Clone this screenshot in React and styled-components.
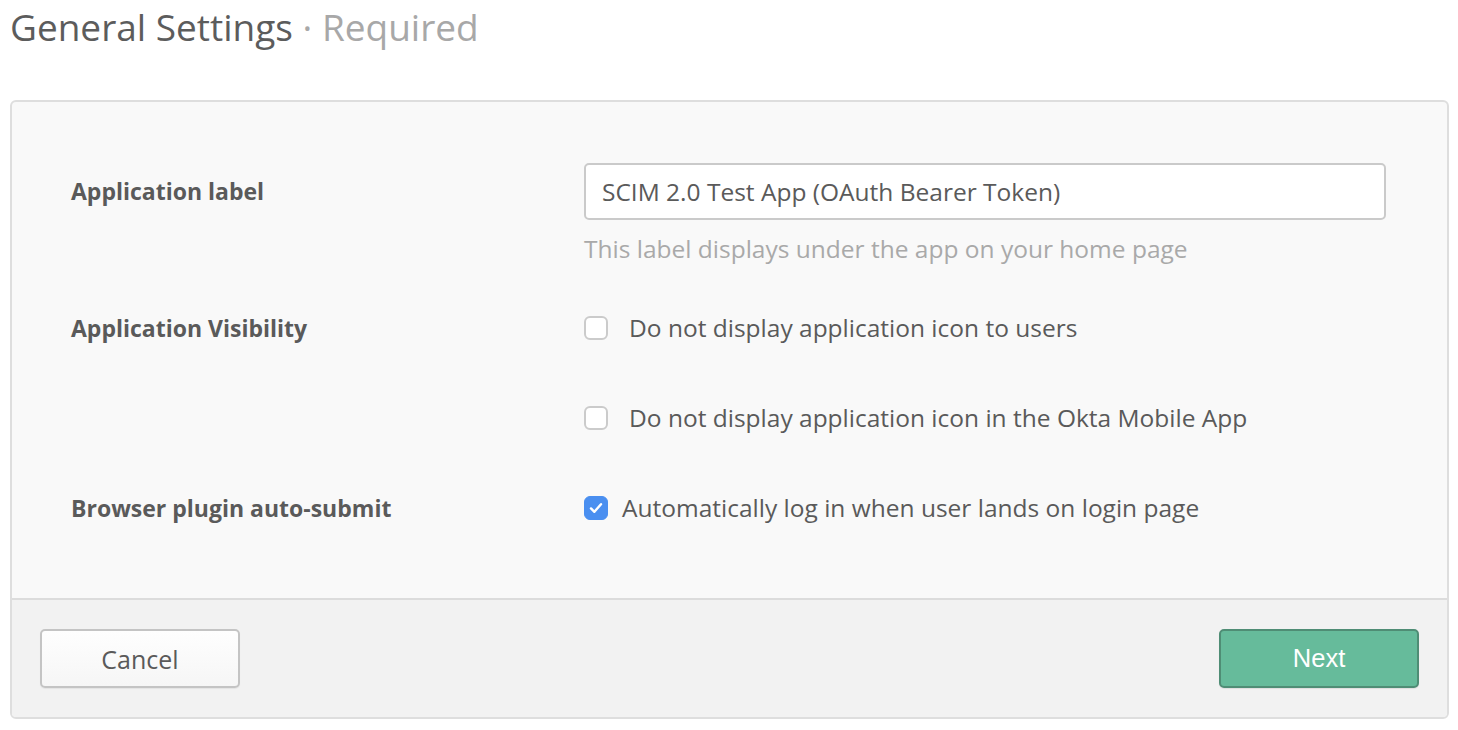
import React from "react";
import styled, { createGlobalStyle } from "styled-components";

const GlobalStyle = createGlobalStyle`
  html, body { margin: 0; padding: 0; background: #ffffff; }
  body { font-family: "Open Sans", "Noto Sans", sans-serif; color: #5c5c5c; }
  * { box-sizing: border-box; }
`;

const Page = styled.div`
  padding: 0 9px 0 10px;
`;

const Title = styled.h1`
  margin: 0 0 46px 0;
  font-size: 37px;
  font-weight: 400;
  line-height: 54px;
  color: #5c5c5c;
  white-space: nowrap;
`;

const Muted = styled.span`
  color: #a8a8a8;
`;

const Panel = styled.section`
  border: 2px solid #dedede;
  border-radius: 6px;
  overflow: hidden;
  background: #f9f9f9;
`;

const Body = styled.div`
  padding: 61px 61px 75px 59px;
`;

const Row = styled.div`
  display: grid;
  grid-template-columns: 513px 1fr;
  align-items: start;
  margin-top: ${(p) => p.$top || 0}px;
`;

const Label = styled.div`
  font-size: 23px;
  font-weight: 700;
  color: #5a5a5a;
  line-height: ${(p) => p.$lh || 30}px;
  white-space: nowrap;
`;

const Field = styled.div`
  display: flex;
  flex-direction: column;
`;

const TextInput = styled.input`
  height: 57px;
  width: 100%;
  border: 2px solid #cacaca;
  border-radius: 5px;
  background: #ffffff;
  padding: 0 16px;
  font-family: "Open Sans", "Noto Sans", sans-serif;
  font-size: 24.5px;
  color: #5a5a5a;
  outline: none;
`;

const Hint = styled.div`
  margin-top: 14px;
  font-size: 24.5px;
  line-height: 30px;
  color: #a9a9a9;
  white-space: nowrap;
`;

const Option = styled.label`
  display: flex;
  align-items: center;
  gap: ${(p) => p.$gap}px;
  height: 30px;
  margin-top: ${(p) => p.$top || 0}px;
  font-size: 24.5px;
  line-height: 30px;
  color: #5a5a5a;
  white-space: nowrap;
`;

const Box = styled.span`
  flex: none;
  width: 24px;
  height: 24px;
  margin-top: -1px;
  border-radius: 6px;
  display: flex;
  align-items: center;
  justify-content: center;
  background: ${(p) => (p.$checked ? "#4a8ff0" : "#ffffff")};
  border: ${(p) => (p.$checked ? "1px solid #4a8ff0" : "2px solid #cbcbcb")};
`;

const Footer = styled.div`
  display: flex;
  justify-content: space-between;
  align-items: center;
  border-top: 2px solid #dcdcdc;
  background: #f2f2f2;
  padding: 29px 28px;
`;

const Button = styled.button`
  width: 200px;
  height: 59px;
  border-radius: 5px;
  cursor: pointer;
  font-size: 25px;
`;

const CancelButton = styled(Button)`
  background: linear-gradient(#fefefe, #f6f6f6);
  border: 2px solid #c4c4c4;
  box-shadow: 0 1px 1px rgba(0, 0, 0, 0.06);
  color: #5a5a5a;
  font-family: "Open Sans", "Noto Sans", sans-serif;
`;

const NextButton = styled(Button)`
  background: #66bb9b;
  border: 2px solid #4f8d75;
  box-shadow: 0 1px 1px rgba(0, 0, 0, 0.08);
  color: #ffffff;
  font-family: "Liberation Sans", Arial, sans-serif;
  font-size: 25.5px;
`;

function Checkbox({ checked }) {
  return (
    <Box $checked={checked}>
      {checked && (
        <svg width="16" height="16" viewBox="0 0 16 16" fill="none">
          <path d="M3 8.4 L6.4 11.8 L13 4.2" stroke="#ffffff" strokeWidth="2.4" strokeLinecap="round" strokeLinejoin="round" />
        </svg>
      )}
    </Box>
  );
}

export default function App() {
  return (
    <Page>
      <GlobalStyle />
      <Title>
        General Settings <Muted>· Required</Muted>
      </Title>
      <Panel>
        <Body>
          <Row>
            <Label $lh={57}>Application label</Label>
            <Field>
              <TextInput defaultValue="SCIM 2.0 Test App (OAuth Bearer Token)" />
              <Hint>This label displays under the app on your home page</Hint>
            </Field>
          </Row>
          <Row $top={49}>
            <Label>Application Visibility</Label>
            <Field>
              <Option $gap={21}>
                <Checkbox />
                Do not display application icon to users
              </Option>
              <Option $gap={21} $top={60}>
                <Checkbox />
                Do not display application icon in the Okta Mobile App
              </Option>
            </Field>
          </Row>
          <Row $top={60}>
            <Label>Browser plugin auto-submit</Label>
            <Field>
              <Option $gap={14}>
                <Checkbox checked />
                Automatically log in when user lands on login page
              </Option>
            </Field>
          </Row>
        </Body>
        <Footer>
          <CancelButton>Cancel</CancelButton>
          <NextButton>Next</NextButton>
        </Footer>
      </Panel>
    </Page>
  );
}
